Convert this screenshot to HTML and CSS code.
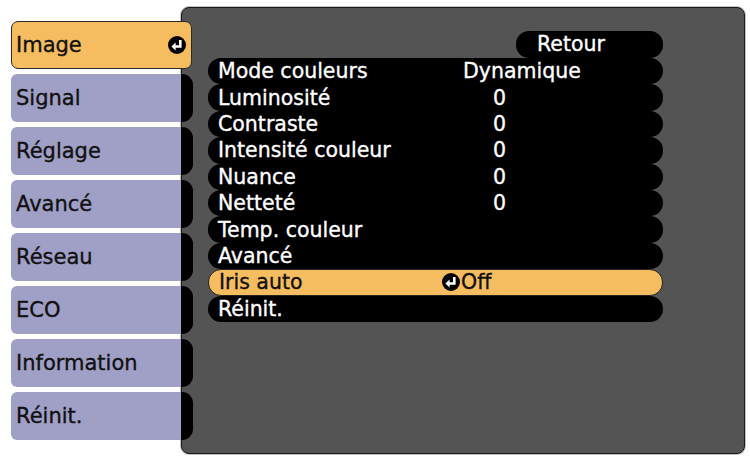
FILE: index.html
```html
<!DOCTYPE html>
<html lang="fr">
<head>
<meta charset="utf-8">
<title>Image</title>
<link rel="stylesheet" href="styles.css">
</head>
<body>
<div class="screen">
  <nav class="tabs">
    <div class="tab active"><span class="face">Image<svg class="enter" viewBox="0 0 18 18" width="18" height="18"><circle cx="9" cy="9" r="9" fill="#000"/><path d="M12.3 4V10.5H7" fill="none" stroke="#fff" stroke-width="2.6"/><path d="M3.4 10.5L7.6 6.6V14.4Z" fill="#fff"/></svg></span></div>
    <div class="tab"><span class="face">Signal</span><span class="end"></span></div>
    <div class="tab"><span class="face">Réglage</span><span class="end"></span></div>
    <div class="tab"><span class="face">Avancé</span><span class="end"></span></div>
    <div class="tab"><span class="face">Réseau</span><span class="end"></span></div>
    <div class="tab"><span class="face">ECO</span><span class="end"></span></div>
    <div class="tab"><span class="face">Information</span><span class="end"></span></div>
    <div class="tab"><span class="face">Réinit.</span><span class="end"></span></div>
  </nav>
  <section class="panel">
    <div class="back">Retour</div>
    <ul class="rows">
      <li class="row"><span class="label">Mode couleurs</span><span class="value">Dynamique</span></li>
      <li class="row"><span class="label">Luminosité</span><span class="value zero">0</span></li>
      <li class="row"><span class="label">Contraste</span><span class="value zero">0</span></li>
      <li class="row"><span class="label">Intensité couleur</span><span class="value zero">0</span></li>
      <li class="row"><span class="label">Nuance</span><span class="value zero">0</span></li>
      <li class="row"><span class="label">Netteté</span><span class="value zero">0</span></li>
      <li class="row"><span class="label">Temp. couleur</span></li>
      <li class="row"><span class="label">Avancé</span></li>
      <li class="row sel"><span class="label">Iris auto</span><span class="value"><svg class="enter" viewBox="0 0 18 18" width="18" height="18"><circle cx="9" cy="9" r="9" fill="#000"/><path d="M12.3 4V10.5H7" fill="none" stroke="#fff" stroke-width="2.6"/><path d="M3.4 10.5L7.6 6.6V14.4Z" fill="#fff"/></svg>Off</span></li>
      <li class="row"><span class="label">Réinit.</span></li>
    </ul>
  </section>
</div>
</body>
</html>
```

FILE: styles.css
```css
html, body {
  margin: 0;
  background: #fff;
}
body {
  font-family: "DejaVu Sans", "Noto Sans", sans-serif;
}
.screen {
  display: flex;
  align-items: flex-start;
  width: 750px;
  height: 459px;
}
.tabs {
  display: flex;
  flex-direction: column;
  gap: 5px;
  margin: 21px 0 0 11px;
  width: 182px;
  position: relative;
  z-index: 1;
}
.tab {
  display: flex;
  height: 48px;
}
.face {
  flex: 0 0 170px;
  box-sizing: border-box;
  display: flex;
  align-items: center;
  padding-left: 5px;
  background: #a09fc6;
  border-radius: 6px 0 0 6px;
  font-size: 21px;
  color: #111;
  -webkit-text-stroke: 0.35px #111;
}
.end {
  flex: 0 0 12px;
  background: #000;
  border-radius: 0 11px 11px 0;
}
.tab.active .face {
  flex: 0 0 181px;
  justify-content: space-between;
  padding-right: 5px;
  padding-left: 4px;
  background: #f5bd5f;
  border: 1px solid #2a2a2a;
  border-radius: 7px;
}
.enter {
  display: block;
  flex: none;
}
.panel {
  margin: 7px 0 0 -12px;
  width: 564px;
  height: 447px;
  box-sizing: border-box;
  padding: 23px 0 0 26px;
  background: #545454;
  border: 1px solid #1a1a1a;
  box-shadow: 0 0 0 1px #c4c4c4;
  border-radius: 8px;
}
.back {
  margin-left: 308px;
  width: 147px;
  height: 27px;
  box-sizing: border-box;
  padding-left: 21px;
  background: #000;
  border-radius: 13px;
  color: #fff;
  font-size: 20.5px;
  line-height: 27px;
  -webkit-text-stroke: 0.35px #fff;
}
.rows {
  list-style: none;
  margin: 0;
  padding: 0;
  width: 455px;
}
.row {
  display: flex;
  align-items: center;
  height: 26.4px;
  box-sizing: border-box;
  padding-left: 10px;
  background: #000;
  border-radius: 13px;
  color: #fff;
  font-size: 20.5px;
  line-height: 24px;
  -webkit-text-stroke: 0.35px #fff;
}
.label {
  flex: 0 0 245px;
}
.value {
  display: flex;
  align-items: center;
}
.value.zero {
  padding-left: 30px;
}
.row.sel {
  background: #f5bd5f;
  color: #111;
  -webkit-text-stroke: 0.35px #111;
  border: 1px solid #222;
}
.row.sel .label {
  flex-basis: 244px;
}
.row.sel .enter {
  margin-left: -21px;
  margin-right: 1px;
}
```
